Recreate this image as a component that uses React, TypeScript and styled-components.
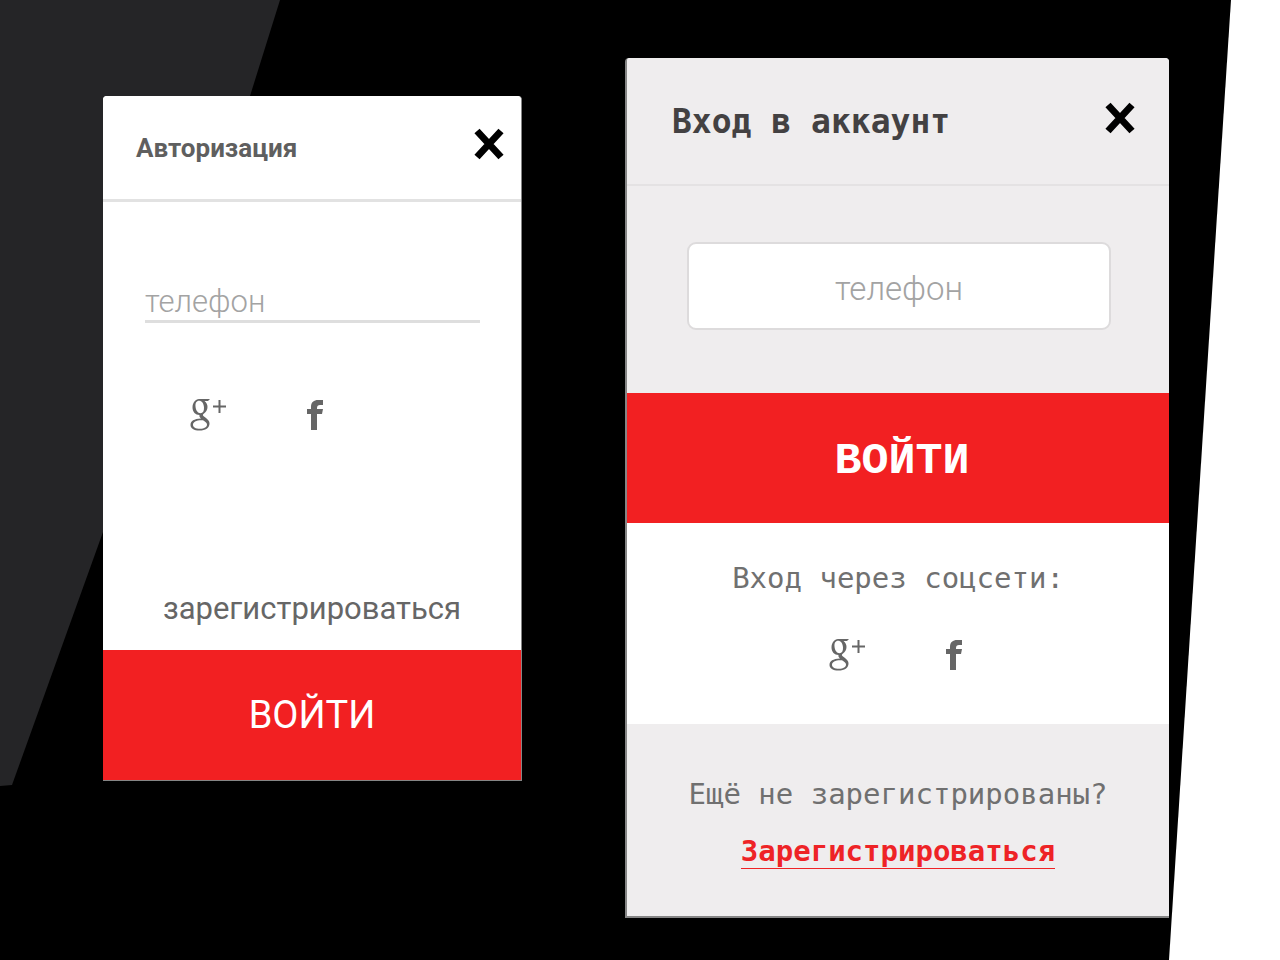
import React from 'react';
import styled, { createGlobalStyle } from 'styled-components';

const sans = `Roboto, "Liberation Sans", sans-serif`;
const mono = `"DejaVu Sans Mono", "Liberation Mono", monospace`;
const monoCaps = `"Liberation Mono", "DejaVu Sans Mono", monospace`;

const GlobalStyle = createGlobalStyle`
  *, *::before, *::after { box-sizing: border-box; }
  body { margin: 0; background: #000; font-family: ${sans}; }
  button, input { font: inherit; margin: 0; }
`;

const Page = styled.main`
  position: relative;
  display: grid;
  grid-template-columns: 419fr 544fr;
  column-gap: 103px;
  align-items: start;
  min-height: 100vh;
  padding: 58px 111px 40px 103px;
`;

const Backdrop = styled.svg`
  position: absolute;
  inset: 0;
  width: 100%;
  height: 100%;
`;

const Card = styled.form<{ $tinted?: boolean }>`
  position: relative;
  display: flex;
  flex-direction: column;
  margin-top: ${p => (p.$tinted ? 0 : 38)}px;
  background: #fff;
  border-radius: 4px 4px 0 0;
  border-style: solid;
  border-color: #858585;
  border-width: ${p => (p.$tinted ? '0 0 2px 2px' : '0 1px 1px 0')};
`;

const Header = styled.header<{ $tinted?: boolean }>`
  display: flex;
  justify-content: space-between;
  align-items: center;
  height: ${p => (p.$tinted ? 128 : 106)}px;
  padding: ${p => (p.$tinted ? '2px 33px 0 45px' : '0 16px 0 33px')};
  background: ${p => (p.$tinted ? '#efedee' : '#fff')};
  border-bottom: ${p => (p.$tinted ? '2px solid #e4e2e3' : '3px solid #e2e2e2')};
  border-radius: 4px 4px 0 0;
`;

const Title = styled.h2<{ $mono?: boolean }>`
  margin: 0;
  font: ${p => (p.$mono ? `700 33px/40px ${mono}` : `700 26px/40px ${sans}`)};
  color: ${p => (p.$mono ? '#434142' : '#5f5f5f')};
`;

const Close = styled.button`
  display: flex;
  margin-bottom: 8px;
  padding: 0;
  border: 0;
  background: none;
  cursor: pointer;
`;

const LineField = styled.label`
  display: flex;
  margin: 81px 41px 0 42px;
`;

const BoxField = styled.label`
  display: flex;
  padding: 56px 58px 63px 60px;
  background: #efedee;
`;

const LineInput = styled.input`
  width: 100%;
  height: 40px;
  padding: 0;
  border: 0;
  border-bottom: 3px solid #dedede;
  font: 300 31px/36px ${sans};
  color: #5f5f5f;
  &::placeholder { color: #a3a3a3; opacity: 1; }
`;

const BoxInput = styled.input`
  width: 100%;
  height: 88px;
  padding: 4px 0 0;
  border: 2px solid #dddbdc;
  border-radius: 9px;
  background: #fff;
  font: 300 33px/40px ${sans};
  text-align: center;
  color: #5f5f5f;
  &::placeholder { color: #a3a3a3; opacity: 1; }
`;

const Socials = styled.div<{ $centered?: boolean }>`
  display: flex;
  align-items: center;
  gap: 80px;
  justify-content: ${p => (p.$centered ? 'center' : 'flex-start')};
  padding: ${p => (p.$centered ? '0 4px 0 0' : '76px 0 0 87px')};
`;

const SocialButton = styled.button`
  display: flex;
  padding: 0;
  border: 0;
  background: none;
  color: #666;
  cursor: pointer;
`;

const PlainLink = styled.a`
  align-self: center;
  margin: 157px 0 22px;
  font: 400 31px/38px ${sans};
  color: #666;
  text-decoration: none;
`;

const Submit = styled.button<{ $strong?: boolean }>`
  height: 130px;
  padding: ${p => (p.$strong ? '8px 0 0 8px' : '0')};
  border: 0;
  background: #f22022;
  color: #fff;
  font: ${p => (p.$strong ? `700 45px/48px ${monoCaps}` : `400 38px/48px ${sans}`)};
  cursor: pointer;
`;

const SocialSection = styled.section`
  display: flex;
  flex-direction: column;
  gap: 42px;
  height: 201px;
  padding-top: 36px;
`;

const Note = styled.p`
  margin: 0;
  font: 400 29px/38px ${mono};
  color: #707070;
  text-align: center;
`;

const Footer = styled.footer`
  display: flex;
  flex-direction: column;
  align-items: center;
  gap: 21px;
  padding: 51px 0 47px;
  background: #efedee;
`;

const RegisterLink = styled.a`
  border-bottom: 1px solid #ee2326;
  font: 700 29px/34px ${mono};
  color: #ee2326;
  text-decoration: none;
`;

const CrossIcon = () => (
  <svg width="32" height="34" viewBox="0 0 32 34" aria-hidden="true">
    <path d="M4 4 28 30M28 4 4 30" stroke="#000" strokeWidth="7" />
  </svg>
);

const GoogleIcon = () => (
  <svg width="37" height="34" viewBox="0 0 37 34" fill="currentColor" aria-hidden="true">
    <path
      fillRule="evenodd"
      d="M9 0H20L18 2H14.500C16.500 3.500 17.500 5.500 17.500 8C17.500 11 16 13 14 14.500C12.500 15.500 12.500 16.500 14 17.500L16 19C18.500 21 19.500 22.500 19.500 24.500C19.500 29 15.500 31.500 9.500 31.500C4 31.500 .5 29.500 .5 26C.5 22 4 19.800 11 19.500C9.500 18.200 9.200 17.200 9.500 16C5.500 16 2.500 13 2.500 8.500C2.500 4 5.500 0 9 0ZM9 1.800C6.500 1.800 5.200 4 5.500 7.500C5.800 11.500 8 14.200 10.500 14.200C13 14.200 14.200 12 14 8.500C13.800 4.500 11.800 1.800 9 1.800ZM11.500 21.200C6 21.300 3 23 3 25.700C3 28.200 5.500 29.700 10 29.700C14.500 29.700 17 28.200 17 25.500C17 23.500 15 22.500 13 21.200Z"
    />
    <path d="M23 7.500H36M29.500 1V14" fill="none" stroke="currentColor" strokeWidth="2" />
  </svg>
);

const FacebookIcon = () => (
  <svg width="17" height="34" viewBox="0 0 17 34" fill="currentColor" aria-hidden="true">
    <path d="M4 31V15H0V10H4V8C4 3 7 1 11 1H16V6H13C11 6 10 7 10 9V10H16L15 15H10V31Z" />
  </svg>
);

const SocialButtons = ({ centered }: { centered?: boolean }) => (
  <Socials $centered={centered}>
    <SocialButton type="button" aria-label="Google+"><GoogleIcon /></SocialButton>
    <SocialButton type="button" aria-label="Facebook"><FacebookIcon /></SocialButton>
  </Socials>
);

export default function App() {
  return (
    <>
      <GlobalStyle />
      <Page>
        <Backdrop viewBox="0 0 1280 960" preserveAspectRatio="none" aria-hidden="true">
          <path d="M0 0H280L250 96 103 532 12 785 0 786Z" fill="#252527" />
          <path d="M1231 0H1280V960H1169L1218 200Z" fill="#fff" />
        </Backdrop>

        <Card>
          <Header>
            <Title>Авторизация</Title>
            <Close type="button" aria-label="Закрыть"><CrossIcon /></Close>
          </Header>
          <LineField>
            <LineInput type="tel" placeholder="телефон" aria-label="телефон" />
          </LineField>
          <SocialButtons />
          <PlainLink href="#register">зарегистрироваться</PlainLink>
          <Submit type="button">ВОЙТИ</Submit>
        </Card>

        <Card $tinted>
          <Header $tinted>
            <Title $mono>Вход в аккаунт</Title>
            <Close type="button" aria-label="Закрыть"><CrossIcon /></Close>
          </Header>
          <BoxField>
            <BoxInput type="tel" placeholder="телефон" aria-label="телефон" />
          </BoxField>
          <Submit type="button" $strong>ВОЙТИ</Submit>
          <SocialSection>
            <Note>Вход через соцсети:</Note>
            <SocialButtons centered />
          </SocialSection>
          <Footer>
            <Note>Ещё не зарегистрированы?</Note>
            <RegisterLink href="#register">Зарегистрироваться</RegisterLink>
          </Footer>
        </Card>
      </Page>
    </>
  );
}
